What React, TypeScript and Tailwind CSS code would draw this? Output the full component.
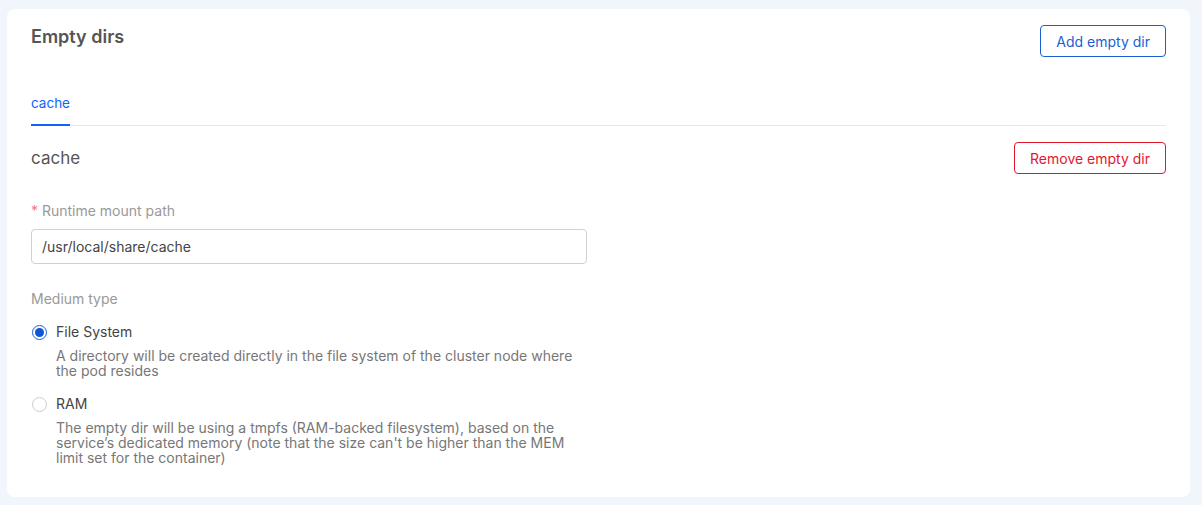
import React, { useState } from 'react';

const font = { fontFamily: "Inter, 'Noto Sans', sans-serif" };

export default function App() {
  const [medium, setMedium] = useState<'fs' | 'ram'>('fs');
  const [path, setPath] = useState('/usr/local/share/cache');

  return (
    <div className="min-h-[505px] w-[1202px] bg-[#f1f6fd] pt-[9px] pl-[7px]" style={font}>
      <div className="w-[1183px] rounded-lg bg-white px-6 pt-4 pb-[32px]">
        {/* Header */}
        <div className="flex items-start justify-between">
          <h2 className="pt-px text-[18px] font-semibold leading-[22px] text-[#555]">Empty dirs</h2>
          <button className="h-[32px] rounded border border-[#1a5fd6] px-[15px] text-[14px] text-[#1a5fd6]">
            Add empty dir
          </button>
        </div>

        {/* Tabs */}
        <div className="mt-[37px] flex border-b border-[#e8e8e8]">
          <div className="-mb-px border-b-2 border-[#0f62fe] pb-[12px] text-[13.5px] leading-[18px] text-[#0f62fe]">
            cache
          </div>
        </div>

        {/* Section header */}
        <div className="mt-[16px] flex items-center justify-between">
          <h3 className="text-[17px] leading-[22px] text-[#555]">cache</h3>
          <button className="h-[32px] rounded border border-[#e0182d] px-[15px] text-[14px] text-[#e0182d]">
            Remove empty dir
          </button>
        </div>

        {/* Path */}
        <div className="mt-[28px] text-[14px] leading-[18px] text-[#999]">
          <span className="text-[#f07a84]">*</span> Runtime mount path
        </div>
        <input
          value={path}
          onChange={(e) => setPath(e.target.value)}
          className="mt-[9px] h-[35px] w-[556px] rounded border border-[#d0d0d0] px-[10px] text-[14px] text-[#444] outline-none"
          style={font}
        />

        {/* Medium */}
        <div className="mt-[26px] text-[14px] leading-[18px] text-[#999]">Medium type</div>
        <div className="mt-[15px] flex flex-col gap-[17px]">
          <Option
            checked={medium === 'fs'}
            onClick={() => setMedium('fs')}
            label="File System"
            desc="A directory will be created directly in the file system of the cluster node where the pod resides"
          />
          <Option
            checked={medium === 'ram'}
            onClick={() => setMedium('ram')}
            label="RAM"
            desc="The empty dir will be using a tmpfs (RAM-backed filesystem), based on the service’s dedicated memory (note that the size can't be higher than the MEM limit set for the container)"
          />
        </div>
      </div>
    </div>
  );
}

function Option({
  checked,
  onClick,
  label,
  desc,
}: {
  checked: boolean;
  onClick: () => void;
  label: string;
  desc: string;
}) {
  return (
    <div className="flex cursor-pointer gap-[9px]" onClick={onClick}>
      <div className="pt-[2px] pl-px">
        {checked ? (
          <div className="flex h-[15px] w-[15px] items-center justify-center rounded-full border border-[#1a5fd6]">
            <div className="h-[9px] w-[9px] rounded-full bg-[#0f55d6]" />
          </div>
        ) : (
          <div className="h-[15px] w-[15px] rounded-full border border-[#ccc]" />
        )}
      </div>
      <div className="w-[522px]">
        <div className="text-[14px] leading-[18px] text-[#444]">{label}</div>
        <div className="mt-[7px] text-[14px] leading-[15px] text-[#777]">{desc}</div>
      </div>
    </div>
  );
}
